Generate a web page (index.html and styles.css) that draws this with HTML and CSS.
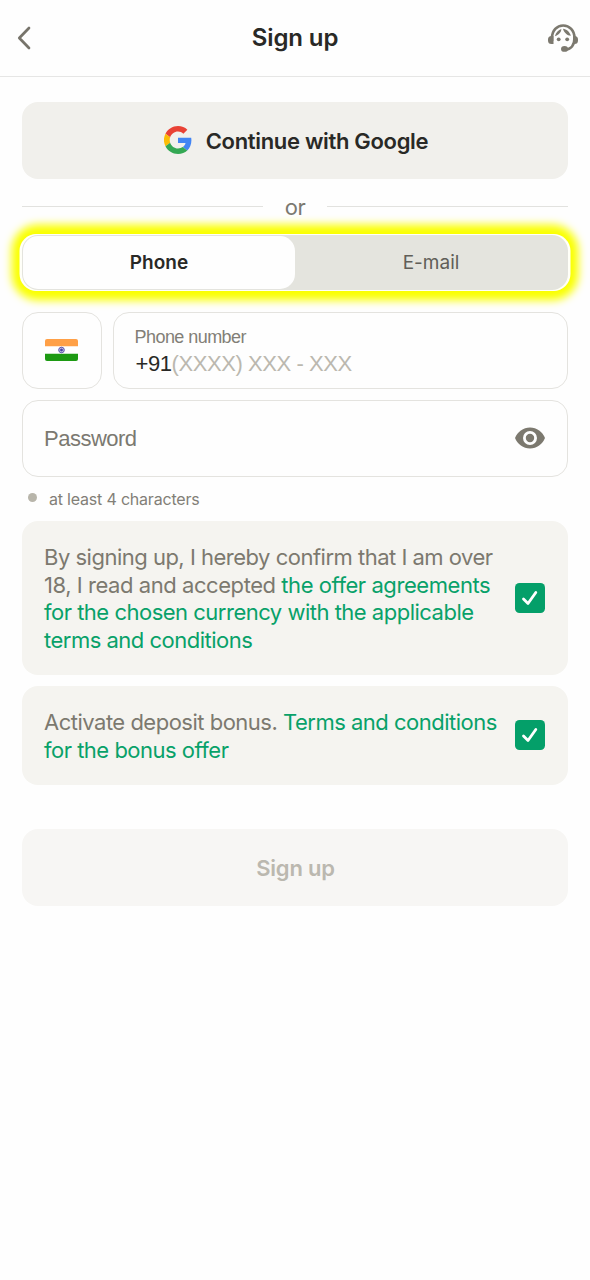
FILE: index.html
```html
<!DOCTYPE html>
<html lang="en">
<head>
<meta charset="utf-8">
<title>Sign up</title>
<link rel="stylesheet" href="styles.css">
</head>
<body>
<header class="header">
  <svg class="back" viewBox="0 0 14 24"><path d="M12 2L2.300 12L12 22"/></svg>
  <h1 class="title">Sign up</h1>
  <svg class="support" viewBox="0 0 30 28">
    <path class="line" d="M4 17V14C4 6.500 9 1.500 15.200 1.500S26.500 6.500 26.500 14C26.500 21 23 25.500 17 25.500"/>
    <path d="M5.500 12v8H3.500A3.500 3.500 0 0 1 0 16.500v-1A3.500 3.500 0 0 1 3.500 12zM25 12h1.500A3.500 3.500 0 0 1 30 15.500v1A3.500 3.500 0 0 1 26.500 20H25z"/>
    <path d="M6.900 12.200C8 8.300 10.500 5.800 13.300 5C13.600 8 10.500 11 6.900 12.200zM15 4.700C18.500 5 21.500 7.500 22.900 11.800C19 11.500 16 8.500 15 4.700z"/>
    <circle cx="10.700" cy="15.300" r="1.900"/><circle cx="19.200" cy="15.300" r="1.900"/>
    <ellipse cx="16.500" cy="24.900" rx="3.500" ry="2.900"/>
  </svg>
</header>
<main class="form">
  <button class="google">
    <svg class="google-logo" viewBox="0 0 48 48">
      <path fill="#e94235" d="M24 9.500c3.540 0 6.710 1.220 9.210 3.600l6.850-6.850C35.900 2.380 30.470 0 24 0 14.620 0 6.510 5.380 2.560 13.220l7.980 6.190C12.430 13.720 17.740 9.500 24 9.500z"/>
      <path fill="#4285f4" d="M46.980 24.550c0-1.570-.15-3.090-.38-4.550H24v9.020h12.940c-.58 2.960-2.260 5.480-4.780 7.180l7.730 6c4.510-4.180 7.090-10.360 7.090-17.650z"/>
      <path fill="#fbbc05" d="M10.530 28.590A14.500 14.500 0 0 1 10.530 19.410l-7.980-6.190A24 24 0 0 0 2.560 34.780z"/>
      <path fill="#34a853" d="M24 48c6.480 0 11.930-2.130 15.890-5.810l-7.730-6c-2.150 1.450-4.920 2.300-8.160 2.300-6.260 0-11.570-4.220-13.470-9.910l-7.980 6.190C6.510 42.620 14.620 48 24 48z"/>
    </svg>
    <span class="google-text">Continue with Google</span>
  </button>
  <div class="divider"><span class="or">or</span></div>
  <div class="tabs"><div class="tab active">Phone</div><div class="tab">E-mail</div></div>
  <div class="phone-row">
    <div class="country">
      <svg class="flag" viewBox="0 0 33 22">
        <rect width="33" height="22" rx="2" fill="#fff"/>
        <path fill="#ffa047" d="M2 0H31A2 2 0 0 1 33 2V7.300H0V2A2 2 0 0 1 2 0z"/>
        <path fill="#1d9a13" d="M0 14.700H33V20A2 2 0 0 1 31 22H2A2 2 0 0 1 0 20z"/>
        <circle cx="16.500" cy="11" r="2.800" fill="#dcdcf2" stroke="#5148a7" stroke-width=".9"/>
        <circle cx="16.500" cy="11" r="1.300" fill="#42389d"/>
        <path d="M13.700 11h5.600M16.500 8.200v5.600M14.500 9l4 4M18.500 9l-4 4" stroke="#5148a7" stroke-width=".4"/>
      </svg>
    </div>
    <div class="field phone">
      <div class="label">Phone number</div>
      <div class="value"><span class="code">+91</span><span class="mask">(XXXX) XXX - XXX</span></div>
    </div>
  </div>
  <div class="field password">
    <span class="password-text">Password</span>
    <svg class="eye" viewBox="0 0 30 22"><path d="M15 .5C8.200 .5 2.500 4.700 0 11C2.500 17.300 8.200 21.500 15 21.500S27.500 17.300 30 11C27.500 4.700 21.800 .5 15 .5z"/><circle cx="15" cy="11" r="5.600"/></svg>
  </div>
  <div class="hint"><i class="dot"></i><span>at least 4 characters</span></div>
  <div class="consent terms">
    <p class="copy">By signing up, I hereby confirm that I am over<br><span class="loose">18, I read and accepted <a>the offer agreements</a></span><br><a>for the chosen currency with the applicable</a><br><a>terms and conditions</a></p>
    <svg class="check" viewBox="0 0 30 30"><rect width="30" height="30" rx="4.500"/><path d="M8.500 16L13 20.500L20.800 9.500"/></svg>
  </div>
  <div class="consent bonus">
    <p class="copy">Activate deposit bonus. <a>Terms and conditions</a><br><a>for the bonus offer</a></p>
    <svg class="check" viewBox="0 0 30 30"><rect width="30" height="30" rx="4.500"/><path d="M8.500 16L13 20.500L20.800 9.500"/></svg>
  </div>
  <button class="submit">Sign up</button>
</main>
</body>
</html>
```
FILE: styles.css
```css
* { box-sizing: border-box; }
body { margin: 0; min-height: 1280px; background: #fefefe; font-family: Inter, sans-serif; color: #292926; }
button { border: 0; padding: 0; font-family: inherit; }
svg { display: block; flex: none; }
.header { height: 77px; border-bottom: 1px solid #e6e6e5; display: grid; grid-template-columns: 60px 1fr 60px; align-items: center; }
.back { width: 14px; height: 24px; margin-left: 17px; fill: none; stroke: #77746b; stroke-width: 2.7; stroke-linecap: round; stroke-linejoin: round; }
.title { margin: 0; padding-bottom: 2px; text-align: center; font-size: 24px; font-weight: 600; letter-spacing: -.1px; }
.support { width: 30px; height: 28px; margin-left: 18px; fill: #7c796f; }
.support .line { fill: none; stroke: #7c796f; stroke-width: 2.7; }
.form { padding: 25px 22px 0; display: flex; flex-direction: column; }
.google { height: 76.5px; padding-left: 2px; border-radius: 16px; background: #f1f0ec; color: #292926; display: flex; align-items: center; justify-content: center; gap: 14px; }
.google-logo { width: 28px; height: 28px; }
.google-text { padding-top: 1px; font-size: 22px; font-weight: 600; letter-spacing: -.32px; }
.divider { height: 56.5px; display: flex; align-items: center; gap: 22px; }
.divider::before, .divider::after { content: ""; flex: 1; height: 1px; background: #e2e2df; }
.or { color: #7b7971; font-size: 22px; letter-spacing: -.5px; }
.tabs { height: 55px; border-radius: 16px; padding: 1px; background: #e4e4de; display: flex; box-shadow: -1.5px 0 0 1px #fffff8, 1.5px 0 0 1px #fffff8, 0 0 9px 10.5px #faff00; }
.tab { flex: 1; border-radius: 15px; display: flex; align-items: center; justify-content: center; font-size: 19px; color: #605e58; }
.tab.active { background: #fefefe; color: #292926; font-weight: 600; }
.phone-row { margin-top: 22px; display: flex; gap: 11px; }
.country, .field { height: 76.5px; border: 1.5px solid #e4e3df; border-radius: 16px; }
.country { width: 79.5px; display: flex; align-items: center; justify-content: center; }
.flag { width: 33px; height: 22px; }
.phone { flex: 1; padding: 14px 21px; font-family: "Liberation Sans", sans-serif; letter-spacing: -.43px; }
.label { font-size: 18px; line-height: 21px; letter-spacing: -.55px; color: #827f77; }
.value { padding-left: 1px; font-size: 22px; line-height: 32px; white-space: nowrap; }
.mask { color: #bbb8af; }
.password { margin-top: 11.5px; padding: 0 22px 0 21px; display: flex; align-items: center; justify-content: space-between; }
.password-text { padding-top: 1px; font: 22px "Liberation Sans", sans-serif; letter-spacing: -.5px; color: #7b7971; }
.eye { width: 30px; height: 22px; margin-bottom: 1px; fill: #7c796f; }
.eye circle { stroke: #fefefe; stroke-width: 2.8; }
.hint { height: 44.5px; padding-left: 6px; display: flex; align-items: center; gap: 12px; font-size: 16px; letter-spacing: -.2px; color: #827f77; }
.dot { width: 9px; height: 9px; border-radius: 50%; background: #b8b5aa; margin-top: -2px; }
.consent { border-radius: 16px; background: #f5f4f0; padding: 0 23px 0 22px; display: flex; align-items: center; justify-content: space-between; }
.terms { height: 153.5px; }
.bonus { height: 98.5px; margin-top: 11.5px; }
.copy { margin: 0; padding-top: 3px; font-size: 22px; line-height: 27.5px; letter-spacing: -.5px; color: #7c796f; white-space: nowrap; }
.copy .loose { letter-spacing: -.44px; }
.copy a { color: #08a169; }
.check { width: 30px; height: 30px; fill: #049f69; }
.check path { fill: none; stroke: #fff; stroke-width: 2.8; stroke-linecap: round; stroke-linejoin: round; }
.submit { height: 76.5px; margin-top: 44.5px; padding: 1px 0 0 1px; border-radius: 16px; background: #f7f6f4; color: #bbb8af; font-size: 22px; font-weight: 600; letter-spacing: -.2px; }
```
